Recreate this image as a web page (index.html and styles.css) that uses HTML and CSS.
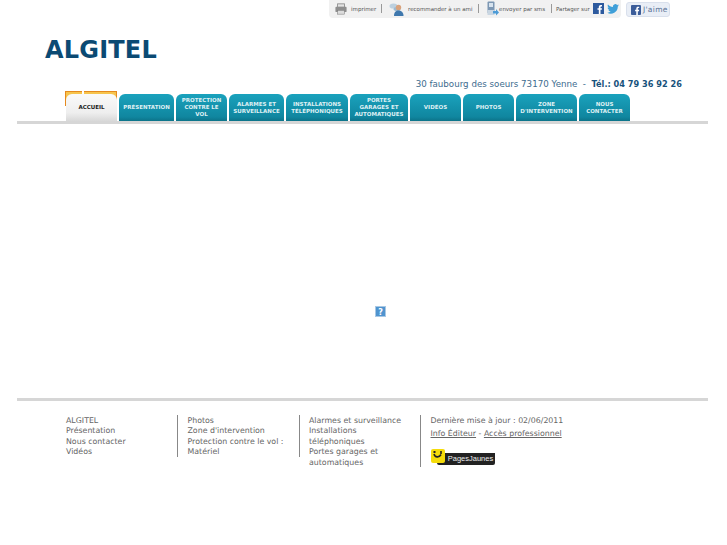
FILE: index.html
```html
<!DOCTYPE html>
<html lang="fr">
  <head>
    <meta charset="UTF-8" />
    <meta name="viewport" content="width=device-width, initial-scale=1.0" />
    <title>ALGITEL</title>
    <link rel="stylesheet" href="styles.css">
  </head>
  <body>
    <div class="topbar">
      <div class="tools">
        <a class="tool tool-print" href="#">
          <svg width="12" height="12" viewBox="0 0 14 13"><rect x="3" y="0.5" width="8" height="4" fill="#e4e4e4" stroke="#8a8a8a"/><rect x="0.5" y="4" width="13" height="6" rx="1" fill="#8e8e8e"/><rect x="3" y="8" width="8" height="4.5" fill="#dcdcdc" stroke="#777" stroke-width="0.6"/></svg>
          <span>imprimer</span>
        </a>
        <a class="tool tool-friend" href="#">
          <svg width="15" height="14" viewBox="0 0 15 14"><ellipse cx="4.5" cy="4" rx="4" ry="2.6" fill="#bcd0df"/><ellipse cx="8" cy="7" rx="3.500" ry="2" fill="#9fbad0"/><circle cx="9.5" cy="5.5" r="2.7" fill="#d9a27c"/><path d="M5 14c0-4 2-5.500 4.500-5.500S14.500 10 14.500 14z" fill="#3f78ad"/></svg>
          <span>recommander à un ami</span>
        </a>
        <a class="tool tool-sms" href="#">
          <svg width="13" height="15" viewBox="0 0 13 15"><rect x="1.500" y="0.500" width="7" height="12" rx="1" fill="#7d97b3"/><rect x="3" y="2" width="4" height="4" fill="#d7e3ee"/><rect x="1.500" y="9" width="7" height="5" fill="#c9d6e2"/><path d="M7 10h3V8l3 3.500-3 3v-2H7z" fill="#4d9bd6"/></svg>
          <span>envoyer par sms</span>
        </a>
        <div class="share">
          <span>Partager sur</span>
          <svg width="11" height="11" viewBox="0 0 11 11"><rect width="11" height="11" fill="#2d5a9e"/><path d="M7.500 11V6.800h1.300l.2-1.600H7.500v-1c0-.5.2-.8.800-.8H9V2c-.3 0-.8-.1-1.200-.1-1.200 0-2 .7-2 2v1.300H4.500v1.600h1.300V11z" fill="#fff"/></svg>
          <svg class="bird" width="12" height="10" viewBox="0 0 12 10"><path d="M12 1.200c-.4.200-.9.300-1.400.4.500-.3.900-.8 1-1.300-.5.300-1 .5-1.500.6A2.400 2.400 0 0 0 6 3.100C4 3 2.200 2 1 .5.300 1.600.700 3 1.700 3.700c-.4 0-.8-.1-1.100-.3 0 1.200.8 2.200 1.900 2.400-.4.100-.7.100-1.100 0 .3 1 1.200 1.700 2.300 1.700A5 5 0 0 1 0 8.600 7 7 0 0 0 10.800 2.400c.5-.3.900-.7 1.200-1.200z" fill="#3f9fd8"/></svg>
        </div>
      </div>
      <a class="like" href="#">
        <svg width="10" height="10" viewBox="0 0 11 11"><rect width="11" height="11" rx="1" fill="#3b5d9a"/><path d="M7.500 11V6.800h1.300l.2-1.600H7.500v-1c0-.5.2-.8.800-.8H9V2c-.3 0-.8-.1-1.200-.1-1.200 0-2 .7-2 2v1.300H4.500v1.600h1.300V11z" fill="#fff"/></svg>
        <span>J'aime</span>
      </a>
    </div>

    <header class="brand">
      <h1>ALGITEL</h1>
      <p class="contact">30 faubourg des soeurs 73170 Yenne&nbsp; - &nbsp;<strong>Tél.: 04 79 36 92 26</strong></p>
    </header>

    <nav class="menu">
      <span class="menu-deco"><i></i><i></i></span>
      <a class="tab active tab-accueil" href="#">Accueil</a>
      <a class="tab tab-pres" href="#">Présentation</a>
      <a class="tab tab-prot" href="#">Protection contre le vol</a>
      <a class="tab tab-alarm" href="#">Alarmes et surveillance</a>
      <a class="tab tab-inst" href="#">Installations téléphoniques</a>
      <a class="tab tab-port" href="#">Portes garages et automatiques</a>
      <a class="tab tab-vid" href="#">Vidéos</a>
      <a class="tab tab-pho" href="#">Photos</a>
      <a class="tab tab-zone" href="#">Zone d'intervention</a>
      <a class="tab tab-nous" href="#">Nous contacter</a>
    </nav>

    <main class="content">
      <svg width="11" height="11" viewBox="0 0 11 11" role="img" aria-label="contenu manquant"><rect x="0.500" y="0.500" width="10" height="10" fill="#4f94cf" stroke="#a9c8e4"/><text x="5.500" y="8.500" text-anchor="middle" class="missing">?</text></svg>
    </main>

    <footer class="foot">
      <div class="foot-col">
        <a href="#">ALGITEL</a>
        <a href="#">Présentation</a>
        <a href="#">Nous contacter</a>
        <a href="#">Vidéos</a>
      </div>
      <div class="foot-col">
        <a href="#">Photos</a>
        <a href="#">Zone d'intervention</a>
        <a href="#">Protection contre le vol :</a>
        <a href="#">Matériel</a>
      </div>
      <div class="foot-col">
        <a href="#">Alarmes et surveillance</a>
        <a href="#">Installations téléphoniques</a>
        <a href="#">Portes garages et automatiques</a>
      </div>
      <div class="foot-col foot-last">
        <p>Dernière mise à jour : 02/06/2011</p>
        <p class="foot-links"><a href="#">Info Éditeur</a> - <a href="#">Accès professionnel</a></p>
        <div class="pj">
          <span class="pj-logo">
            <svg width="14" height="13" viewBox="0 0 14 13"><path d="M3 5c1 3.500 5 4 7 .5M10 2v3" fill="none" stroke="#222" stroke-width="1.600"/><rect x="2.500" y="2" width="2" height="2" fill="#222"/></svg>
          </span>
          <span class="pj-text">PagesJaunes</span>
        </div>
      </div>
    </footer>
  </body>
</html>
```

FILE: styles.css
```css
* {
  box-sizing: border-box;
}

body {
  margin: 0;
  font-family: "DejaVu Sans", Verdana, sans-serif;
  background: #fff;
  color: #555;
}

a {
  color: inherit;
  text-decoration: none;
}

/* top tool bar */
.topbar {
  display: flex;
  align-items: flex-start;
  gap: 5px;
  height: 18px;
  margin-left: 329px;
}

.tools {
  display: flex;
  align-items: center;
  width: 292px;
  height: 18px;
  padding-left: 6px;
  padding-bottom: 1px;
  background: #f1f1f1;
  border-radius: 0 0 4px 4px;
  font-size: 5.5px;
  color: #555;
  white-space: nowrap;
}

.tool {
  display: flex;
  align-items: center;
  gap: 4px;
  height: 9px;
  border-right: 1px solid #999;
}

.tool-print {
  width: 47px;
}

.tool-friend {
  width: 90px;
  margin-left: 7px;
}

.tool-sms {
  width: 66px;
  margin-left: 7px;
  gap: 0;
}

.share {
  display: flex;
  align-items: center;
  gap: 3px;
  margin-left: 4px;
}

.like {
  display: flex;
  align-items: center;
  gap: 2px;
  width: 44px;
  height: 15px;
  margin-top: 2px;
  padding-left: 4px;
  background: #e9eef6;
  border: 1px solid #d9e0ec;
  border-radius: 3px;
  font-size: 7.500px;
  letter-spacing: 0.3px;
  color: #5a7396;
}

/* logo and address */
.brand {
  height: 76px;
  padding-top: 17px;
  padding-left: 45px;
  padding-right: 45px;
}

.brand h1 {
  margin: 0;
  font-size: 24px;
  line-height: 30px;
  letter-spacing: 0.2px;
  font-weight: bold;
  color: #0b4a73;
}

.contact {
  margin: 13px 0 0;
  font-size: 8.700px;
  line-height: 12px;
  text-align: right;
  color: #3d6c8e;
}

.contact strong {
  font-size: 8.200px;
  color: #17527c;
}

/* main menu */
.menu {
  position: relative;
  display: flex;
  gap: 2px;
  height: 30px;
  margin: 0 19px 0 17px;
  padding-left: 49px;
  border-bottom: 3px solid #d6d6d6;
}

.menu-deco {
  position: absolute;
  left: 0;
  top: 0;
}

.menu-deco i {
  position: absolute;
  top: -3px;
  height: 15px;
  background: #f6c44d;
  border-top: 1px solid #e58a1e;
  border-left: 1px solid #e58a1e;
}

.menu-deco i:first-child {
  left: 48px;
  width: 17px;
}

.menu-deco i:last-child {
  left: 67px;
  width: 33px;
  border-left: 0;
  border-right: 1px solid #e58a1e;
}

.tab {
  position: relative;
  display: flex;
  align-items: center;
  justify-content: center;
  height: 27px;
  padding: 0 2px;
  background: linear-gradient(#1aa2bd, #10869f 85%, #0c7389);
  border-radius: 6px 6px 0 0;
  font-size: 5.500px;
  line-height: 6.800px;
  font-weight: bold;
  text-align: center;
  text-transform: uppercase;
  color: #dff0f4;
}

.tab.active {
  background: linear-gradient(#fafafa, #eee 70%, #d8d8d8);
  color: #222;
}

.tab-accueil { width: 51px; }
.tab-pres { width: 55px; }
.tab-prot { width: 51px; }
.tab-alarm { width: 55px; }
.tab-inst { width: 62px; }
.tab-port { width: 58px; }
.tab-vid { width: 51px; }
.tab-pho { width: 51px; }
.tab-zone { width: 61px; }
.tab-nous { width: 51px; }

/* page body */
.content {
  display: flex;
  justify-content: center;
  align-items: flex-start;
  height: 277px;
  padding-top: 182px;
  padding-left: 36px;
  margin: 0 19px 0 17px;
  border-bottom: 3px solid #d6d6d6;
}

.missing {
  font-size: 8px;
  font-weight: bold;
  fill: #fff;
}

/* footer */
.foot {
  display: flex;
  align-items: flex-start;
  margin-top: 14px;
  padding-left: 66px;
  font-size: 7.850px;
  line-height: 10.400px;
  color: #666;
}

.foot-col {
  width: 121.500px;
  height: 42px;
  padding-top: 1px;
  padding-left: 9.500px;
  padding-right: 13px;
  border-left: 1px solid #888;
}

.foot-col:first-child {
  width: 111px;
  padding-left: 0;
  border-left: 0;
}

.foot-col a {
  display: block;
}

.foot-last {
  width: 180px;
  height: 52px;
  padding-right: 0;
}

.foot-last p {
  margin: 0;
}

.foot-links {
  margin-top: 3px !important;
}

.foot-links a {
  display: inline;
  text-decoration: underline;
}

.pj {
  display: flex;
  align-items: flex-end;
  margin-top: 9px;
}

.pj-logo {
  position: relative;
  display: block;
  width: 14px;
  height: 14px;
  background: #f5dc0a;
  border-radius: 2px;
}

.pj-text {
  width: 58px;
  height: 12px;
  margin-left: -8px;
  margin-bottom: -2px;
  padding-left: 10px;
  background: #222;
  border-radius: 0 0 2px 2px;
  font-family: "Liberation Sans", Arial, sans-serif;
  font-size: 7.500px;
  line-height: 12px;
  text-align: center;
  color: #eee;
}
```
